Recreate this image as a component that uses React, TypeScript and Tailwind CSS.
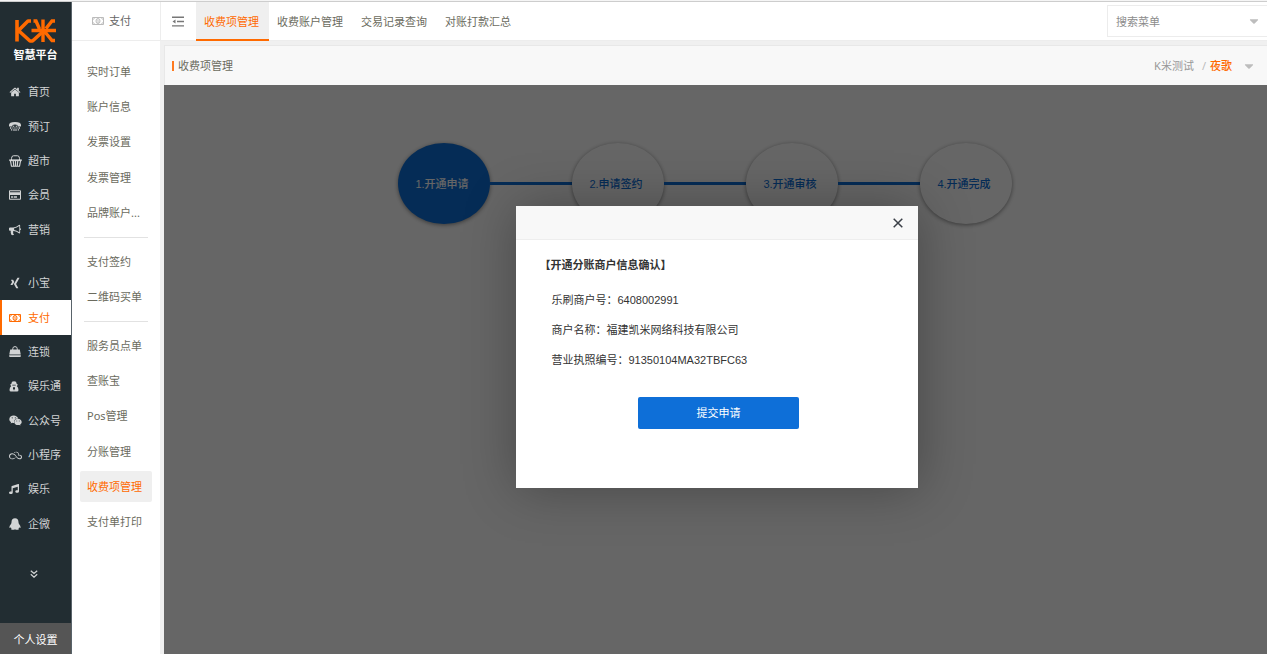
import type { ReactNode } from 'react'
import { FaCaretDown, FaMusic, FaRegCreditCard, FaSkyatlas, FaWeixin, FaXing } from 'react-icons/fa'

function HomeIcon() {
  return (
    <svg viewBox="0 0 1792 1792" className="h-3 w-3" fill="currentColor" aria-hidden="true">
      <path d="M1472 992v480q0 26-19 45t-45 19h-384v-384h-256v384h-384q-26 0-45-19t-19-45v-480q0-1 .5-3t.5-3l575-474 575 474q1 2 1 6zm223-69l-62 74q-8 9-21 11h-3q-13 0-21-7l-692-577-692 577q-12 8-24 7-13-2-21-11l-62-74q-8-10-7-23.5t11-21.5l719-599q32-26 76-26t76 26l244 204v-195q0-14 9-23t23-9h192q14 0 23 9t9 23v408l219 182q10 8 11 21.5t-7 23.5z" />
    </svg>
  )
}

function HornIcon() {
  return (
    <svg viewBox="0 0 1792 1792" className="h-3 w-3" fill="currentColor" aria-hidden="true">
      <path d="M1664 640q53 0 90.5 37.5t37.5 90.5-37.5 90.5-90.5 37.5v384q0 52-38 90t-90 38q-417-347-812-380-58 19-91 66t-31 100.5 40 92.5q-20 33-23 65.5t6 58 33.5 55 48 50 61.5 50.5q-29 58-111.5 83t-168.5 11.5-132-55.5q-7-23-29.5-87.5t-32-94.5-23-89-15-101 3.5-98.5 22-110.5h-122q-66 0-113-47t-47-113v-192q0-66 47-113t113-47h480q435 0 896-384 52 0 90 38t38 90v384zm-128 604v-954q-394 302-768 343v270q377 42 768 341z" />
    </svg>
  )
}

function PhoneIcon() {
  return (
    <svg viewBox="0 0 24 18" className="h-[9px] w-3" fill="currentColor" aria-hidden="true">
      <path d="M0 6Q0 0 12 0T24 6V8Q24 9 23 9H18Q17 9 17 8V6Q12 4 7 6V8Q7 9 6 9H1Q0 9 0 8z" />
      <path d="M8 7.500h2.500v2H8zM13.500 7.500H16v2h-2.500zM5 11h2.500v2H5zM9 11h2.500v2H9zM12.800 11h2.500v2h-2.500zM16.700 11h2.500v2h-2.500zM2 10.500h2v3H2zM20 10.500h2v3h-2zM4 14.500h2.500v2.500H4zM8 15h8v2H8zM17.500 14.500H20v2.500h-2.500z" />
    </svg>
  )
}

function BasketIcon() {
  return (
    <svg viewBox="0 0 26 24" className="h-3 w-[13px]" fill="none" stroke="currentColor" aria-hidden="true">
      <path d="M5 10V7Q5 1.500 9 1.500H17Q21 1.500 21 7V10" strokeWidth="2" />
      <path d="M0.500 10.500h25" strokeWidth="3.500" />
      <path d="M3 12l2 10.500h16L23 12M8.500 12l1 10M13 12v10M17.500 12l-1 10" strokeWidth="2.400" />
    </svg>
  )
}

function BagIcon() {
  return (
    <svg viewBox="0 0 24 22" className="h-[11px] w-3" aria-hidden="true">
      <path d="M7.500 9V5.500Q7.500 1.200 12 1.200T16.500 5.500V9" fill="none" stroke="currentColor" strokeWidth="2" />
      <path d="M2.500 7h19L23.500 17H0.500zM0.300 18.300h23.400V20Q23.700 22 22 22H2Q0.300 22 0.300 20z" fill="currentColor" />
    </svg>
  )
}

function PenguinIcon() {
  return (
    <svg viewBox="0 0 24 24" className="h-3 w-3" fill="currentColor" aria-hidden="true">
      <path d="M12 0.500C16.500 0.500 19 3.500 19 8.500C19 10 19.500 11 20 12.200C22 14.500 23.500 17 23 19.500C22.500 20.500 21 19.500 20.500 18.500C20 20 19.500 20.500 19 21C20.500 22 20 23.500 16 23.500Q13.500 23.500 12 22.500Q10.500 23.500 8 23.500C4 23.500 3.500 22 5 21C4.500 20.500 4 20 3.500 18.500C3 19.500 1.500 20.500 1 19.500C0.500 17 2 14.500 4 12.200C4.500 11 5 10 5 8.500C5 3.500 7.500 0.500 12 0.500z" />
    </svg>
  )
}

function MoneyIcon() {
  return (
    <svg viewBox="0 0 24 16" className="h-2 w-3" fill="none" stroke="currentColor" aria-hidden="true">
      <path d="M1 1h22v14H1z" strokeWidth="2" />
      <path d="M1 5q4 0 4-4M19 1q0 4 4 4M1 11q4 0 4 4M19 15q0-4 4-4" strokeWidth="1.600" />
      <ellipse cx="12" cy="8" rx="4" ry="5" strokeWidth="2" />
      <path d="M10.600 6.400l1.600-1v5M10.600 10.600h3" strokeWidth="1.400" />
    </svg>
  )
}

function PouchIcon() {
  return (
    <svg viewBox="0 0 20 22" className="h-[11px] w-[10px]" fill="currentColor" aria-hidden="true">
      <path
        fillRule="evenodd"
        d="M6 1.500Q10-1 14 1.500L15.500 6H17V8.500L15.500 10Q19 13 19 18Q19 21 16 21H4Q1 21 1 18Q1 13 4.500 10L3 8.500V6H4.500zM6.500 7.500h7V9h-7zM8 12.500v4h1.300v2h1.400v-2H12v-4z"
      />
    </svg>
  )
}

function OutdentIcon() {
  return (
    <svg viewBox="0 0 12 11" className="h-[11px] w-3" fill="currentColor" aria-hidden="true">
      <path d="M0 0.500h12v1.400H0zM5 4.800h7v1.400H5zM0 9.200h12v1.400H0zM0.500 5.500l3-2v4z" />
    </svg>
  )
}

function Logo() {
  return (
    <svg viewBox="0 0 42 24" className="h-6 w-[42px]" fill="none" stroke="#ff6a00" aria-label="K米" role="img">
      <path d="M2 1v21.500M16 2H13L4 11V12L15 22h2.500L28 12.500" strokeWidth="3.600" strokeLinejoin="round" />
      <path d="M16.500 11.500H41M28 0.500V23M18.500 2h2.500l3.500 8M40 2h-3L31 9.500M30 13l7 8.500H40" strokeWidth="3.400" />
    </svg>
  )
}

type Item = { label: string; icon: ReactNode; active?: boolean }

const topItems: Item[] = [
  { label: '首页', icon: <HomeIcon /> },
  { label: '预订', icon: <PhoneIcon /> },
  { label: '超市', icon: <BasketIcon /> },
  { label: '会员', icon: <FaRegCreditCard /> },
  { label: '营销', icon: <HornIcon /> },
]

const bottomItems: Item[] = [
  { label: '小宝', icon: <FaXing /> },
  { label: '支付', icon: <MoneyIcon />, active: true },
  { label: '连锁', icon: <BagIcon /> },
  { label: '娱乐通', icon: <PouchIcon /> },
  { label: '公众号', icon: <FaWeixin className="text-[13px]" /> },
  { label: '小程序', icon: <FaSkyatlas className="text-[13px]" /> },
  { label: '娱乐', icon: <FaMusic className="text-[10px]" /> },
  { label: '企微', icon: <PenguinIcon /> },
]

const menuGroups = [
  { size: 'h-[177px]', items: ['实时订单', '账户信息', '发票设置', '发票管理', '品牌账户...'] },
  { size: 'h-[71px]', items: ['支付签约', '二维码买单'] },
  { size: 'h-[212px]', items: ['服务员点单', '查账宝', 'Pos管理', '分账管理', '收费项管理', '支付单打印'] },
]

const tabs = ['收费项管理', '收费账户管理', '交易记录查询', '对账打款汇总']
const steps = ['1.开通申请', '2.申请签约', '3.开通审核', '4.开通完成']
const details = [
  ['乐刷商户号', '6408002991'],
  ['商户名称', '福建凯米网络科技有限公司'],
  ['营业执照编号', '91350104MA32TBFC63'],
]

function NavList({ items, size }: { items: Item[]; size: string }) {
  return (
    <ul className={`grid auto-rows-fr ${size}`}>
      {items.map((item) => (
        <li key={item.label} className="grid">
          <a
            href="#"
            className={`flex items-center border-l-2 pl-[7px] ${
              item.active ? 'border-[#ff6a00] bg-white text-[#ff6a00]' : 'border-transparent text-[#d2d4d5]'
            }`}
          >
            <span className="flex w-[19px] shrink-0 items-center text-[12px]">{item.icon}</span>
            <span className="whitespace-nowrap">{item.label}</span>
          </a>
        </li>
      ))}
    </ul>
  )
}

export default function App() {
  return (
    <div className="flex h-screen flex-col overflow-hidden bg-[#f0f0f0] font-['Noto_Sans','Noto_Sans_CJK_SC',sans-serif] text-[11px] leading-4 text-[#6b6b5e]">
      <div className="h-[2px] shrink-0 border-b border-[#cdcdcd] bg-[#f5f5f5]" />
      <div className="flex min-h-0 flex-1">
        <nav className="flex w-[72px] shrink-0 flex-col border-r border-[#59636a] bg-[#222d32]" aria-label="主导航">
          <div className="flex h-[73px] shrink-0 flex-col items-center pt-[17px]">
            <Logo />
            <span className="mt-1 text-[11px] font-bold leading-4 text-white">智慧平台</span>
          </div>
          <NavList items={topItems} size="h-[172px]" />
          <div className="h-[19px] shrink-0" />
          <NavList items={bottomItems} size="h-[275px]" />
          <button className="mx-auto mt-[21px] flex h-6 items-center pr-[3px] text-[#d2d4d5]" aria-label="展开更多">
            <svg viewBox="0 0 8 8" className="h-2 w-2" fill="none" stroke="currentColor" strokeWidth="1.200">
              <path d="M0.800 0.700L4 3.500 7.200 0.700M0.800 4.300L4 7.100 7.200 4.300" />
            </svg>
          </button>
          <button className="mt-auto h-[31px] shrink-0 bg-[#555] pt-[2px] text-white">个人设置</button>
        </nav>

        <aside className="flex w-[88px] shrink-0 flex-col bg-white">
          <h2 className="flex h-[39px] shrink-0 items-center gap-[5px] border-b border-[#ededed] pl-5 font-normal text-[#666]">
            <span className="text-[#bbb]">
              <MoneyIcon />
            </span>
            支付
          </h2>
          <div className="flex flex-col gap-[6px] pt-[13px]">
            {menuGroups.map((group, index) => (
              <div key={group.size} className="flex flex-col gap-[6px]">
                {index > 0 && <hr className="mx-3 border-[#e2e2e2]" />}
                <ul className={`mx-2 grid auto-rows-fr items-center ${group.size}`}>
                  {group.items.map((label) => (
                    <li key={label}>
                      <a
                        href="#"
                        className={`flex h-[31px] items-center whitespace-nowrap rounded-xs pl-[7px] ${
                          label === '收费项管理' ? 'bg-[#efefef] text-[#ff6a00]' : ''
                        }`}
                      >
                        {label}
                      </a>
                    </li>
                  ))}
                </ul>
              </div>
            ))}
          </div>
        </aside>

        <main className="flex min-w-0 flex-1 flex-col">
          <header className="flex h-[39px] shrink-0 border-b border-l border-[#ededed] bg-white">
            <button className="flex w-[35px] shrink-0 items-center justify-center pr-[2px] text-[#777]" aria-label="收起菜单">
              <OutdentIcon />
            </button>
            <nav className="flex" aria-label="页签">
              {tabs.map((tab, index) => (
                <a
                  key={tab}
                  href="#"
                  className={`-mb-px flex items-center whitespace-nowrap border-b-2 pl-2 pt-[2px] ${
                    index === 0 ? 'w-[73px] border-b-[#ff6a00] bg-[#efefef] text-[#ff6a00]' : 'w-[84px] border-b-transparent'
                  }`}
                >
                  {tab}
                </a>
              ))}
            </nav>
            <label className="relative ml-auto flex w-[160px] items-center">
              <input
                type="text"
                aria-label="搜索菜单"
                placeholder="搜索菜单"
                className="h-8 w-full border border-r-0 border-[#ececec] bg-white pl-2 outline-none placeholder:text-[#8c8c8c]"
              />
              <FaCaretDown className="absolute right-[6px] text-[14px] text-[#bdbdbd]" />
            </label>
          </header>

          <div className="ml-1 mt-1 flex min-h-0 flex-1 flex-col">
            <div className="flex h-10 shrink-0 items-center border-t border-l border-[#e8e8e8] bg-[#f8f8f8] pl-[7px]">
              <span className="h-[10px] w-[2px] bg-[#ff7a1f]" />
              <h1 className="pl-1">收费项管理</h1>
              <div className="ml-auto flex items-center pr-[11px]">
                <span className="text-[#999]">K米测试</span>
                <span className="px-1 pl-2 text-[#bbb]">/</span>
                <button className="flex items-center gap-[10px] text-[#ff6a00]">
                  <span className="font-medium">夜歌</span>
                  <FaCaretDown className="text-[14px] text-[#bdbdbd]" />
                </button>
              </div>
            </div>

            <section className="relative flex-1 bg-white">
              <ol className="flex items-center justify-center pr-[21px] pt-[58px]">
                {steps.map((step, index) => (
                  <li key={step} className="flex items-center">
                    {index > 0 && <span className="h-[3px] w-[82px] bg-[#0e6fd8]" />}
                    <span
                      className={`flex h-[81px] w-[92px] items-center justify-center rounded-[50%] pr-1 font-['Liberation_Sans','Noto_Sans_CJK_SC',sans-serif] font-medium shadow-[0_1px_4px_rgba(0,0,0,0.45)] ${
                        index === 0 ? 'bg-[#0e6fd8] text-white' : 'bg-white text-[#0e6fd8]'
                      }`}
                    >
                      {step}
                    </span>
                  </li>
                ))}
              </ol>

              <div className="absolute inset-0 flex items-start justify-center bg-black/60 pt-[121px]">
                <div
                  role="dialog"
                  aria-labelledby="confirm-title"
                  className="ml-[2px] flex w-[402px] flex-col bg-white pb-[59px] font-['Liberation_Sans','Noto_Sans_CJK_SC',sans-serif] text-[#333] shadow-[1px_1px_50px_rgba(0,0,0,0.3)]"
                >
                  <div className="flex h-[34px] items-center justify-end border-b border-[#eee] bg-[#f8f8f8] pr-[15px] pt-px">
                    <button aria-label="关闭" className="text-[#3a3f47]">
                      <svg viewBox="0 0 10 10" className="h-[10px] w-[10px]" stroke="currentColor" strokeWidth="1.500">
                        <path d="M0.700 0.700l8.600 8.600M9.300 0.700l-8.600 8.600" />
                      </svg>
                    </button>
                  </div>
                  <h3 id="confirm-title" className="mt-[17px] pl-6 font-bold">
                    【开通分账商户信息确认】
                  </h3>
                  <dl className="mt-[19px] flex flex-col gap-[14px] pl-9">
                    {details.map(([name, value]) => (
                      <div key={name} className="flex">
                        <dt>{name}：</dt>
                        <dd>{value}</dd>
                      </div>
                    ))}
                  </dl>
                  <div className="flex justify-center pl-1 pt-[29px]">
                    <button className="h-8 w-[161px] rounded-xs bg-[#0e6fd8] text-white">提交申请</button>
                  </div>
                </div>
              </div>
            </section>
          </div>
        </main>
      </div>
    </div>
  )
}
